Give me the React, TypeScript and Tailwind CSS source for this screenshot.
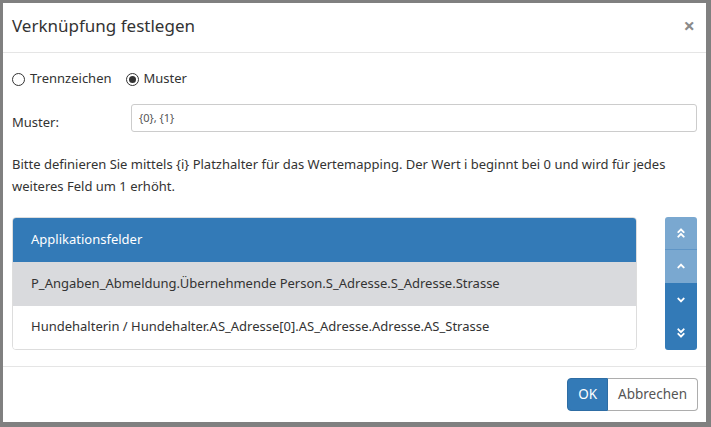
import { FaAngleDoubleUp, FaAngleUp, FaAngleDown, FaAngleDoubleDown } from 'react-icons/fa'

const hint =
  'Bitte definieren Sie mittels {i} Platzhalter für das Wertemapping. Der Wert i beginnt bei 0 und wird für jedes weiteres Feld um 1 erhöht.'

export default function App() {
  return (
    <div className="h-[427px] w-[711px] bg-[#808080] pt-[3px] pl-[3px] pr-[5px] pb-[5px] font-['Noto_Sans',sans-serif] text-[#333]">
      <div className="flex h-full flex-col bg-white">
        <div className="flex h-[50px] items-center justify-between border-b border-[#e5e5e5] pb-[3px] pl-[9px] pr-[11px]">
          <h4 className="text-[17px] text-[#333]">Verknüpfung festlegen</h4>
          <span className="text-[20px] font-bold leading-none text-[#8a8a8a]">×</span>
        </div>

        <div className="flex-1 px-[9px] pt-[15px] text-[13px]">
          <div className="flex h-[22px] items-center gap-[14px]">
            <label className="flex items-center gap-[5px]">
              <span className="h-[13px] w-[13px] rounded-full border border-[#333]" />
              <span>Trennzeichen</span>
            </label>
            <label className="flex items-center gap-[5px]">
              <span className="flex h-[13px] w-[13px] items-center justify-center rounded-full border border-[#333]">
                <span className="h-[7px] w-[7px] rounded-full bg-[#333]" />
              </span>
              <span>Muster</span>
            </label>
          </div>

          <div className="mt-[13px] flex items-center">
            <label className="w-[119px] pt-[10px]">Muster:</label>
            <div className="flex h-[28px] flex-1 items-center rounded-[3px] border border-[#ccc] px-[7px] text-[11px] text-[#555]">
              {'{0}, {1}'}
            </div>
          </div>

          <p className="mt-[20px] leading-[22px]">{hint}</p>

          <div className="mt-[20px] flex gap-[28px]">
            <div className="flex-1 overflow-hidden rounded-[4px] border border-[#ddd]">
              <div className="flex h-[44px] items-center bg-[#337ab7] px-[18px] text-white">Applikationsfelder</div>
              <div className="flex h-[44px] items-center bg-[#d9dadd] px-[18px]">
                P_Angaben_Abmeldung.Übernehmende Person.S_Adresse.S_Adresse.Strasse
              </div>
              <div className="flex h-[43px] items-center bg-white px-[18px]">
                Hundehalterin / Hundehalter.AS_Adresse[0].AS_Adresse.Adresse.AS_Strasse
              </div>
            </div>
            <div className="flex w-[32px] flex-col overflow-hidden rounded-[3px] text-white">
              <div className="flex h-[33px] items-center justify-center border-b border-[#5f95c6] bg-[#7aa8d0]">
                <FaAngleDoubleUp size={12} />
              </div>
              <div className="flex h-[33px] items-center justify-center bg-[#7aa8d0]">
                <FaAngleUp size={12} />
              </div>
              <div className="flex h-[34px] items-center justify-center bg-[#337ab7]">
                <FaAngleDown size={12} />
              </div>
              <div className="flex h-[33px] items-center justify-center bg-[#337ab7]">
                <FaAngleDoubleDown size={12} />
              </div>
            </div>
          </div>
        </div>

        <div className="flex h-[56px] items-center justify-end border-t border-[#e5e5e5] pr-[8px] text-[13.5px]">
          <div className="flex h-[33px]">
            <button className="rounded-l-[4px] border border-[#2e6da4] bg-[#337ab7] px-[10px] text-white">OK</button>
            <button className="rounded-r-[4px] border border-l-0 border-[#adadad] bg-white px-[10px] text-[#555]">Abbrechen</button>
          </div>
        </div>
      </div>
    </div>
  )
}
